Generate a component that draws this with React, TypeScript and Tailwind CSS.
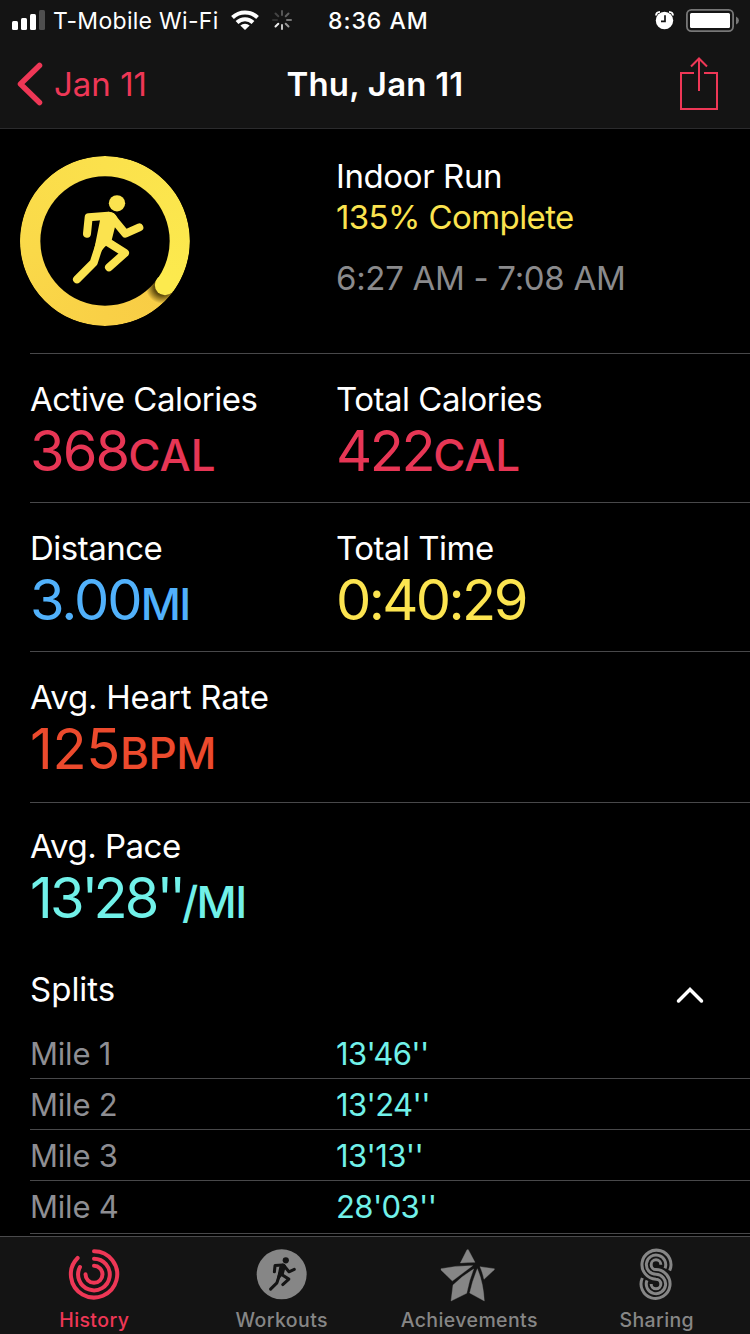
import React from 'react';

const splits = [
  { label: 'Mile 1', pace: "13'46''" },
  { label: 'Mile 2', pace: "13'24''" },
  { label: 'Mile 3', pace: "13'13''" },
  { label: 'Mile 4', pace: "28'03''" },
];

function RunnerShape({ color }: { color: string }) {
  return (
    <g fill="none" stroke={color} strokeWidth="24" strokeLinecap="round" strokeLinejoin="round">
      <circle cx="351" cy="189" r="24.5" fill={color} stroke="none" />
      <path d="M261 280 L266 231 L325 226" />
      <path d="M334 229 L376 280 L418 261" />
      <path d="M318 302 L375 338 L327 381" />
      <path d="M306 290 L281 367 L231 417" />
      <path d="M300 240 L325 214 Q345 214 352 232 L335 300 L312 322 L292 348 L280 340 Z" fill={color} stroke="none" />
    </g>
  );
}

function StatusBar() {
  return (
    <div className="flex h-10 items-center pl-3 pr-[11px] text-white">
      <svg width="33" height="40" viewBox="12 0 33 40">
        <rect x="12" y="21" width="6" height="9" rx="1.5" fill="#fff" />
        <rect x="21" y="18" width="6" height="12" rx="1.5" fill="#fff" />
        <rect x="30" y="14" width="6" height="16" rx="1.5" fill="#fff" />
        <rect x="39" y="10" width="6" height="20" rx="1.5" fill="#4f4f4f" />
      </svg>
      <span className="ml-2 mt-[2px] w-[178px] whitespace-nowrap text-[23px] leading-10 tracking-[0.3px]">T-Mobile Wi-Fi</span>
      <svg width="28" height="40" viewBox="231 0 28 40" fill="none" stroke="#fff" strokeWidth="4">
        <path d="M232.5 17.5 A18 18 0 0 1 257.5 17.5" />
        <path d="M237 22.5 A11.5 11.5 0 0 1 253 22.5" />
        <path d="M245 30 L240.3 25.5 A7 7 0 0 1 249.7 25.5 Z" fill="#fff" stroke="none" />
      </svg>
      <svg className="ml-3" width="22" height="40" viewBox="271 0 22 40" strokeWidth="2" strokeLinecap="round">
        <path d="M282 11v4" stroke="#555" />
        <path d="M288.5 13.5l-2.8 2.8" stroke="#606060" />
        <path d="M291 20h-4" stroke="#777" />
        <path d="M288.5 26.5l-2.8-2.8" stroke="#999" />
        <path d="M282 29v-4" stroke="#c4c4c4" />
        <path d="M275.5 26.5l2.8-2.8" stroke="#eee" />
        <path d="M273 20h4" stroke="#303030" />
        <path d="M275.5 13.5l2.8 2.8" stroke="#444" />
      </svg>
      <span className="ml-[35px] mt-[2px] w-[102px] whitespace-nowrap text-[23px] font-medium leading-10 tracking-[1px]">8:36 AM</span>
      <svg className="ml-auto" width="20" height="40" viewBox="655 0 20 40">
        <circle cx="664.5" cy="20.5" r="8.7" fill="#fff" />
        <path d="M656 15.5 Q656 12 660 11.8 M673 15.5 Q673 12 669 11.8" stroke="#fff" strokeWidth="1.8" fill="none" />
        <path d="M665 15.3v6h-4" stroke="#141414" strokeWidth="1.7" fill="none" />
      </svg>
      <svg className="ml-[11px]" width="53" height="40" viewBox="686 0 53 40">
        <rect x="686.9" y="9.9" width="46.2" height="21.2" rx="4.5" fill="none" stroke="#777" strokeWidth="1.8" />
        <rect x="690" y="13" width="40" height="15" rx="1.5" fill="#fff" />
        <path d="M736 16.5 Q739 18 739 20.5 Q739 23 736 24.5 Z" fill="#777" />
      </svg>
    </div>
  );
}

function NavBar() {
  return (
    <div className="grid h-[88px] grid-cols-[250px_250px_250px] items-center text-[33px] leading-[88px]">
      <div className="flex items-center text-[#ee3756]">
        <svg className="ml-[17px]" width="26" height="88" viewBox="17 40 26 88" fill="none" stroke="currentColor" strokeWidth="5.5" strokeLinecap="round" strokeLinejoin="round">
          <path d="M39.5 65.5 L20.5 84 L39.5 102.5" />
        </svg>
        <span className="ml-[11px] whitespace-nowrap">Jan 11</span>
      </div>
      <h1 className="whitespace-nowrap text-center font-semibold tracking-[0.2px] text-white">Thu, Jan 11</h1>
      <svg className="ml-[179px]" width="41" height="88" viewBox="679 40 41 88" fill="none" stroke="#ee3756" strokeWidth="2">
        <path d="M694 73 H681 V109 H717 V73 H704" />
        <path d="M699 91 V59 M691 66.5 L699 58.5 L707 66.5" />
      </svg>
    </div>
  );
}

function ProgressRing() {
  return (
    <div className="ml-5 mt-[27px] grid h-[170px] w-[170px] shrink-0 rounded-full bg-[conic-gradient(from_126deg,#f8cc45,#f9d046_15%,#fad949_38%,#fbe14c_65%,#fcea4e)]">
      <svg width="170" height="170" viewBox="60 47 510 510">
        <defs>
          <radialGradient id="capShadow" gradientUnits="userSpaceOnUse" cx="487" cy="440" r="50">
            <stop offset="0.5" stopColor="#3a2c00" stopOpacity="0.8" />
            <stop offset="1" stopColor="#3a2c00" stopOpacity="0" />
          </radialGradient>
          <clipPath id="tailClip">
            <path d="M315 302 L519 450 L519 557 L300 557 Z" />
          </clipPath>
        </defs>
        <circle cx="487" cy="440" r="50" fill="url(#capShadow)" clipPath="url(#tailClip)" />
        <circle cx="315" cy="302" r="194" fill="#000" />
        <path d="M315 47 A255 255 0 1 1 314 47 Z M60 47 H570 V557 H60 Z" fill="#000" fillRule="evenodd" />
        <circle cx="495" cy="434" r="30.5" fill="#fcea4e" />
        <RunnerShape color="#fbe34f" />
      </svg>
    </div>
  );
}

interface MetricProps {
  label: string;
  value: React.ReactNode;
  unit?: string;
  className: string;
  labelClassName?: string;
  unitClassName?: string;
}

function Metric({ label, value, unit, className, labelClassName = 'tracking-[-0.5px]', unitClassName = '' }: MetricProps) {
  return (
    <div className="whitespace-nowrap">
      <div className={`text-[33px] leading-10 text-white ${labelClassName}`}>{label}</div>
      <div className={`text-[56px] leading-[64px] ${className}`}>
        {value}
        {unit && <span className={`text-[44px] font-medium leading-none ${unitClassName}`}>{unit}</span>}
      </div>
    </div>
  );
}

function TabItem({ label, active, children }: { label: string; active?: boolean; children: React.ReactNode }) {
  return (
    <div className={`flex flex-col items-center ${active ? 'text-[#ee3756]' : 'text-[#868686]'}`}>
      <svg width="60" height="60" viewBox="0 0 180 180" className="mt-[7px]">
        {children}
      </svg>
      <span className="ml-px mt-[4px] whitespace-nowrap text-[19.5px] font-medium leading-6 tracking-[0.4px]">{label}</span>
    </div>
  );
}

function TabBar() {
  return (
    <nav className="mt-[2px] grid h-[98px] shrink-0 grid-cols-4 border-t border-[#4a4a4c] bg-[#141414]">
      <TabItem label="History" active>
        <g transform="translate(-192 -41)" fill="none" stroke="currentColor" strokeWidth="12" strokeLinecap="round">
          <path d="M282 62.5 A69.5 69.5 0 1 1 232.9 82.9" />
          <path d="M282 85 A47.5 47.5 0 1 1 240 110" />
          <path d="M282 106.5 A25.5 25.5 0 1 1 256.5 132" />
        </g>
      </TabItem>
      <TabItem label="Workouts">
        <circle cx="92" cy="91" r="75" fill="currentColor" />
        <g transform="translate(-29 -23) scale(0.38)">
          <RunnerShape color="#141414" />
        </g>
      </TabItem>
      <TabItem label="Achievements">
        <g transform="translate(-193 -41)" fill="currentColor" stroke="currentColor" strokeWidth="1" strokeLinejoin="round">
          <path d="M277 58 H281 L301 96 Q280 96 257 98 Z" />
          <path d="M316 109 L359 115 V118 L328 147 Q324 127 316 109 Z" />
          <path d="M199 115 Q246 105 294 106 L233 152 L199 119 Z" />
          <path d="M297 116 Q284 148 276 189 L229 212 L235 164 Q263 136 297 116 Z" />
          <path d="M308 115 Q326 157 329 212 L285 188 Q293 152 308 115 Z" />
        </g>
      </TabItem>
      <TabItem label="Sharing">
        <g transform="translate(-753 -41)" fill="none" stroke="currentColor" strokeWidth="9">
          <path d="M884 121 A43.5 43.5 0 1 0 843 146.5 A14.5 14.5 0 1 1 828.5 161" />
          <path d="M870 114 A29 29 0 1 0 843 132 A29 29 0 1 1 816 150" />
          <path d="M857.5 103 A14.5 14.5 0 1 0 843 117.5 A43.5 43.5 0 1 1 802 143" />
        </g>
      </TabItem>
    </nav>
  );
}

export default function App() {
  return (
    <div className="flex h-[1334px] w-[750px] flex-col overflow-hidden bg-black font-['Inter','Liberation_Sans',sans-serif]">
      <header className="h-[129px] shrink-0 border-b border-[#2b2b2d] bg-[#141414]">
        <StatusBar />
        <NavBar />
      </header>

      <main className="flex flex-col">
        <section className="flex h-56">
          <ProgressRing />
          <div className="ml-[146px] mt-[27px] whitespace-nowrap text-[33px] leading-[41px]">
            <div className="tracking-[-0.4px] text-white">Indoor Run</div>
            <div className="tracking-[-0.6px] text-[#fbe34f]">135% Complete</div>
            <div className="mt-5 tracking-[-0.3px] text-[#8a8a8c]">6:27 AM - 7:08 AM</div>
          </div>
        </section>

        <section className="ml-[30px] grid h-[149px] grid-cols-[306px_1fr] border-t border-[#48484a] pt-[25px]">
          <Metric label="Active Calories" value="368" unit="CAL" className="tracking-[-1.9px] text-[#e73655]" unitClassName="tracking-[0px]" />
          <Metric label="Total Calories" value="422" unit="CAL" className="tracking-[-2.4px] text-[#e73655]" unitClassName="tracking-[-0.3px]" />
        </section>
        <section className="ml-[30px] grid h-[149px] grid-cols-[306px_1fr] border-t border-[#48484a] pt-[25px]">
          <Metric label="Distance" value="3.00" unit="MI" className="tracking-[-2px] text-[#51b1fb]" unitClassName="tracking-[-1.5px]" />
          <Metric label="Total Time" value="0:40:29" className="tracking-[-2.6px] text-[#fce450]" />
        </section>
        <section className="ml-[30px] h-[151px] border-t border-[#48484a] pt-[25px]">
          <Metric label="Avg. Heart Rate" value="125" unit="BPM" labelClassName="tracking-[-0.25px]" className="tracking-[-0.3px] text-[#ec4a2d]" unitClassName="tracking-[-0.5px]" />
        </section>
        <section className="ml-[30px] h-32 border-t border-[#48484a] pt-[23px]">
          <Metric
            label="Avg. Pace"
            value={
              <>
                13<span className="tracking-[-5px]">'</span>28<span className="tracking-[-4px]">''</span>
              </>
            }
            unit="/MI"
            className="tracking-[-2.9px] text-[#71f1e9]"
            unitClassName="tracking-[-1.6px]"
          />
        </section>

        <section>
          <div className="flex h-[98px] items-center justify-between pl-[30px] pr-[45px] pt-5">
            <h2 className="text-[33px] leading-10 text-white">Splits</h2>
            <svg className="mt-3" width="30" height="20" viewBox="0 0 30 20" fill="none" stroke="#fff" strokeWidth="3.5" strokeLinecap="round">
              <path d="M3.5 16 L15 4.5 L26.5 16" />
            </svg>
          </div>
          <ul className="ml-[30px]">
            {splits.map((split) => (
              <li
                key={split.label}
                className="grid h-[51px] grid-cols-[306px_1fr] border-b border-[#48484a] text-[31px] leading-[52px] last:h-[53px]"
              >
                <span className="tracking-[-0.2px] text-[#8e8e93]">{split.label}</span>
                <span className="tracking-[-0.6px] text-[#71f1e9]">{split.pace}</span>
              </li>
            ))}
          </ul>
        </section>
      </main>

      <TabBar />
    </div>
  );
}
